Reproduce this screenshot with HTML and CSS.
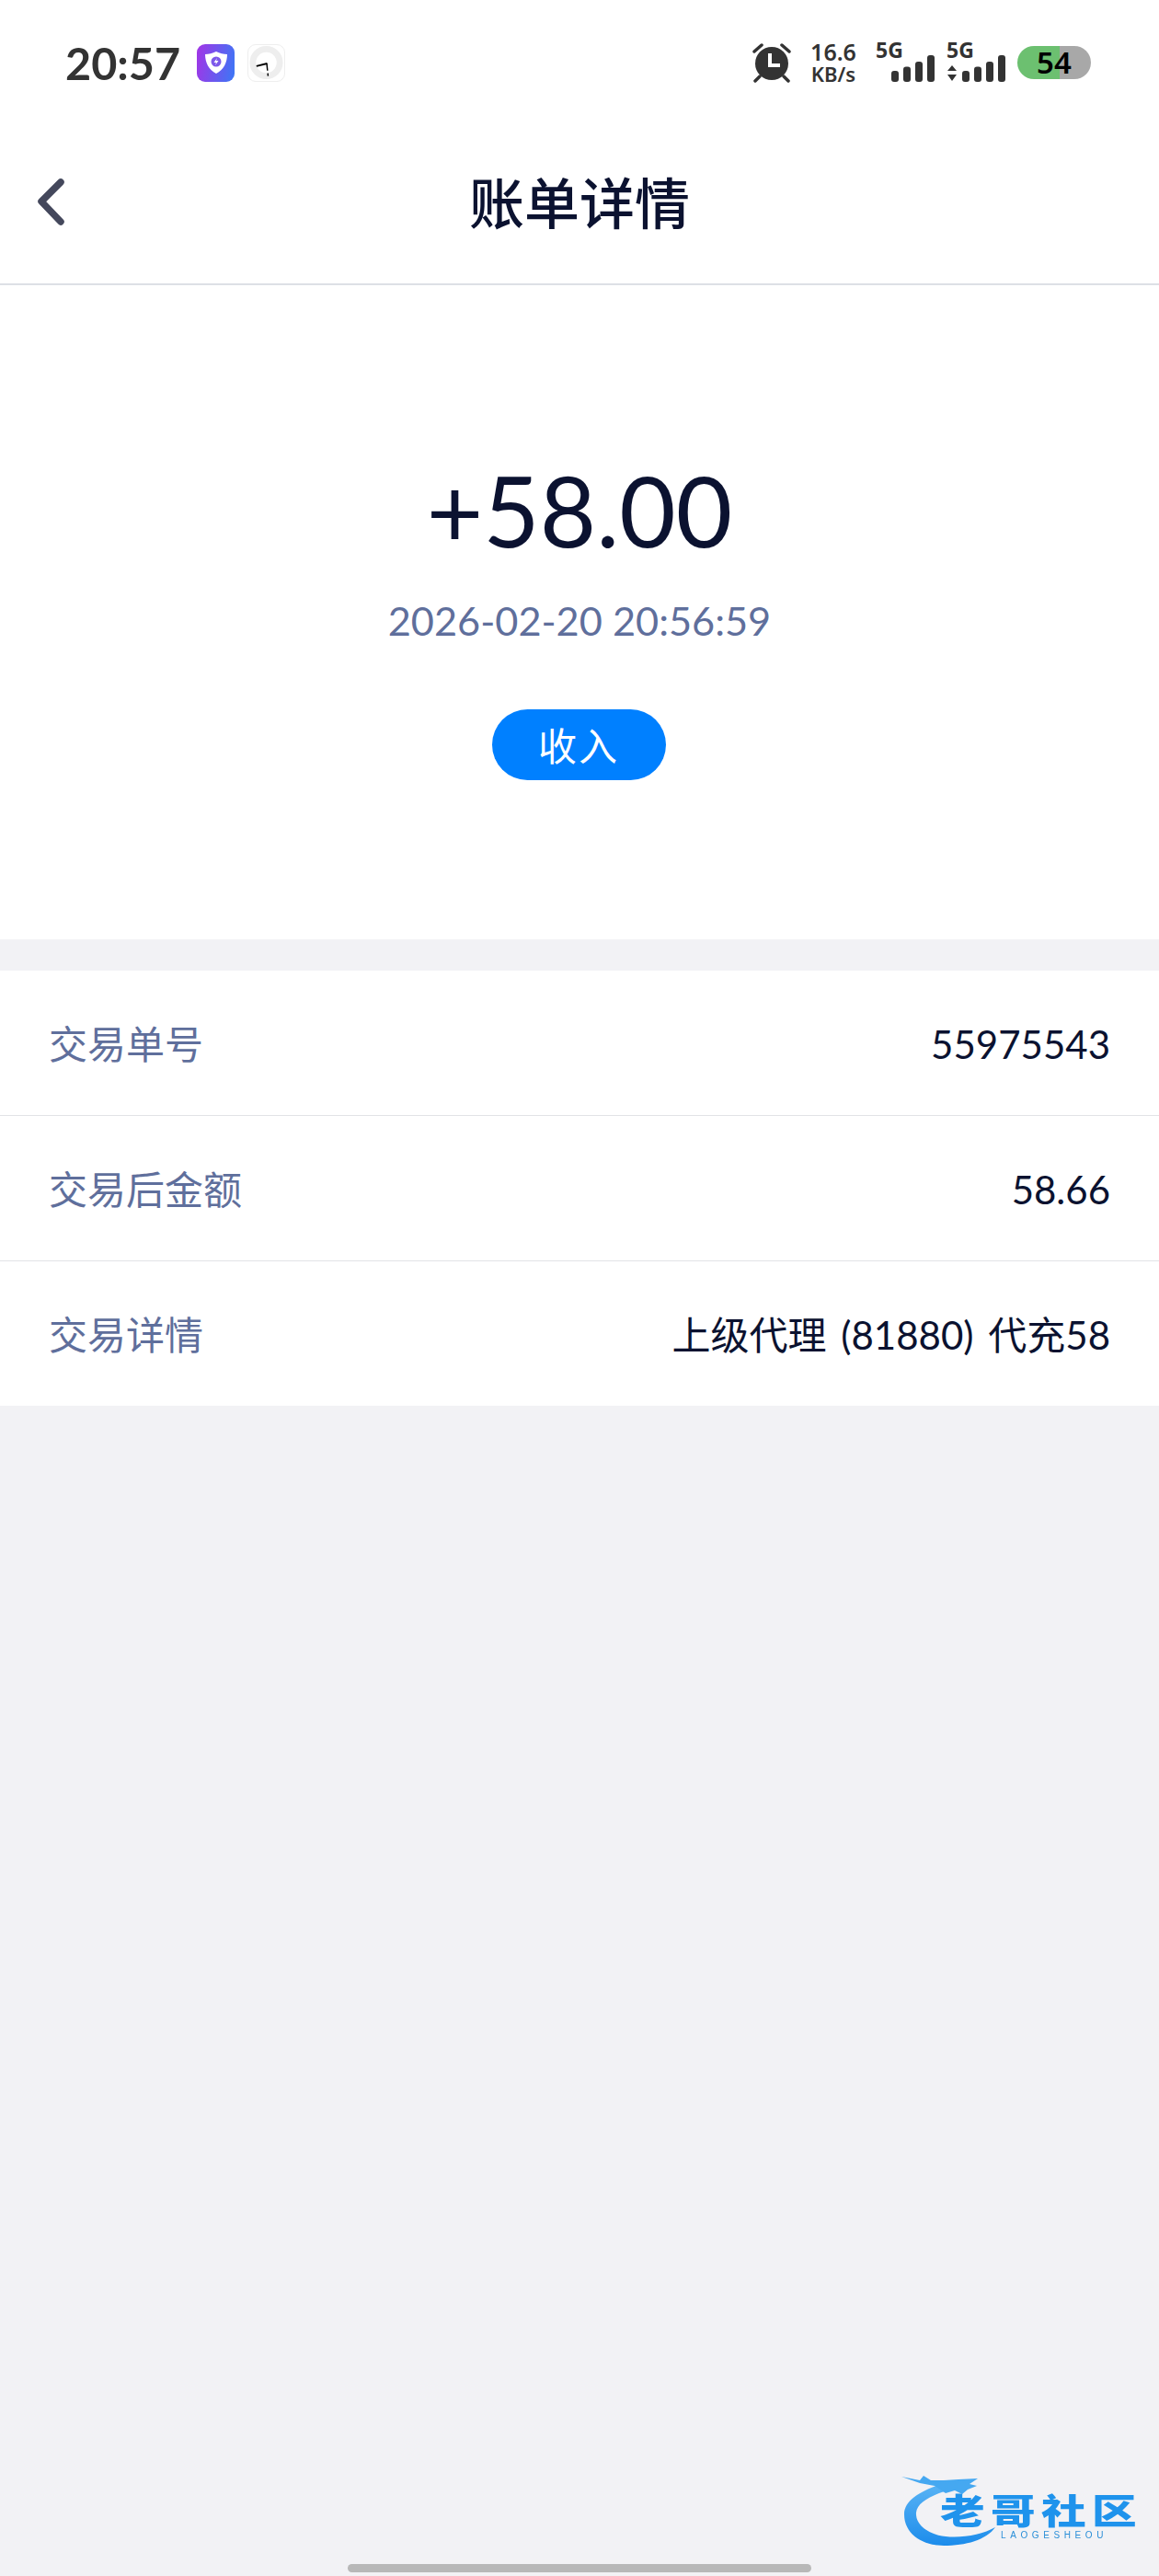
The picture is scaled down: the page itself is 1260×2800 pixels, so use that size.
FILE: index.html
```html
<!DOCTYPE html>
<html lang="zh-CN">
<head>
    <meta charset="UTF-8">
    <meta name="viewport" content="width=device-width, initial-scale=1.0">
    <title>账单详情</title>
    <link rel="stylesheet" href="styles.css">
</head>
<body>
    <div class="page">
        <div class="top">
            <div class="status-bar">
                <div class="status-left">
                    <span class="time">20:57</span>
                    <span class="app-icon app-shield">
                        <svg width="26" height="26" viewBox="0 0 26 26">
                            <path d="M13 1 C17 3 21 4 25 4 C25 13 21 21 13 25 C5 21 1 13 1 4 C5 4 9 3 13 1 Z" fill="#fff"/>
                            <circle cx="13" cy="12" r="5.5" fill="#7d58ea"/>
                            <path d="M14 8 L10.500 13 H13 L12 16 L15.500 11 H13 Z" fill="#fff"/>
                        </svg>
                    </span>
                    <span class="app-icon app-clock">
                        <svg width="40" height="40" viewBox="0 0 40 40">
                            <circle cx="20" cy="20" r="15" fill="none" stroke="#eeeeee" stroke-width="7"/>
                            <path d="M9 24 L21 21" stroke="#000" stroke-width="2" fill="none"/>
                            <path d="M20.500 21 L22 35" stroke="#000" stroke-width="1.500" stroke-dasharray="8 3 5" fill="none"/>
                        </svg>
                    </span>
                </div>
                <div class="status-right">
                    <svg class="alarm" width="44" height="44" viewBox="0 0 44 44">
                        <circle cx="22" cy="23" r="18" fill="#333"/>
                        <path d="M3 10 L11 3 M41 10 L33 3 M9 37 L4 42 M35 37 L40 42" stroke="#333" stroke-width="3.500" stroke-linecap="round"/>
                        <path d="M20 12 V25 H31" stroke="#fff" stroke-width="4" fill="none"/>
                    </svg>
                    <div class="speed">
                        <span class="speed-num">16.6</span>
                        <span class="speed-unit">KB/s</span>
                    </div>
                    <div class="signal">
                        <span class="signal-text">5G</span>
                        <svg class="bars" width="68" height="30" viewBox="0 0 68 30">
                            <rect x="17" y="17" width="8" height="12" rx="3" fill="#333"/>
                            <rect x="30" y="12.500" width="8" height="16.500" rx="3" fill="#333"/>
                            <rect x="43" y="7" width="8" height="22" rx="3" fill="#333"/>
                            <rect x="56" y="0" width="8" height="29" rx="3" fill="#333"/>
                        </svg>
                    </div>
                    <div class="signal">
                        <span class="signal-text">5G</span>
                        <svg class="bars" width="68" height="30" viewBox="0 0 68 30">
                            <path d="M1 17 L6 11 L11 17 Z M1 21 H11 L6 28 Z" fill="#333"/>
                            <rect x="17" y="17" width="8" height="12" rx="3" fill="#333"/>
                            <rect x="30" y="12.500" width="8" height="16.500" rx="3" fill="#333"/>
                            <rect x="43" y="7" width="8" height="22" rx="3" fill="#333"/>
                            <rect x="56" y="0" width="8" height="29" rx="3" fill="#333"/>
                        </svg>
                    </div>
                    <div class="battery">54</div>
                </div>
            </div>
            <div class="nav">
                <svg class="back" width="32" height="52" viewBox="0 0 32 52">
                    <path d="M26 4 L5 25 L26 47" fill="none" stroke="#44485c" stroke-width="7.500" stroke-linecap="round" stroke-linejoin="round"/>
                </svg>
                <h1 class="title">账单详情</h1>
            </div>
        </div>

        <div class="hero">
            <div class="amount">+58.00</div>
            <div class="date">2026-02-20 20:56:59</div>
            <div class="tag">收入</div>
        </div>

        <div class="list">
            <div class="row">
                <span class="label">交易单号</span>
                <span class="value">55975543</span>
            </div>
            <div class="row">
                <span class="label">交易后金额</span>
                <span class="value">58.66</span>
            </div>
            <div class="row">
                <span class="label">交易详情</span>
                <span class="value">上级代理 (81880) 代充58</span>
            </div>
        </div>

        <div class="home-bar"></div>

        <div class="watermark">
            <svg width="110" height="80" viewBox="0 0 110 80">
                <defs>
                    <linearGradient id="dragonBlue" x1="0" y1="0" x2="0" y2="1">
                        <stop offset="0" stop-color="#5ab4f5"/>
                        <stop offset="1" stop-color="#1c8ceb"/>
                    </linearGradient>
                </defs>
                <path d="M46 12 C22 20 3 30 3 46 C3 68 24 80 46 80 C70 80 92 74 102 60 C88 68 66 72 48 70 C30 68 15 58 16 44 C17 34 30 26 50 20 Z" fill="url(#dragonBlue)"/>
                <path d="M0 5 L20 9 L24 4 L32 9 L46 9 L62 8 L83 7 L74 13 L82 15 L72 19 L66 24 L58 20 L48 23 L36 15 L20 12 Z" fill="#45a8f1"/>
            </svg>
            <span class="wm-name">老哥社区</span>
            <span class="wm-sub">LAOGESHEOU</span>
        </div>
    </div>
</body>
</html>
```

FILE: styles.css
```css
body {
    margin: 0;
    background-color: #f2f2f5;
    font-family: "Lato", "Noto Sans CJK SC", sans-serif;
    color: #0b1230;
}
.page {
    position: relative;
    display: flex;
    flex-direction: column;
    height: 2800px;
    overflow: hidden;
}
.top {
    background-color: white;
    border-bottom: 2px solid #dde0e5;
    height: 308px;
}
.status-bar {
    display: flex;
    justify-content: space-between;
    align-items: center;
    height: 136px;
    padding: 0 74px 0 71px;
}
.status-left {
    display: flex;
    align-items: center;
}
.time {
    font-family: "Lato", sans-serif;
    font-size: 48.500px;
    font-weight: 700;
    color: #333;
    width: 143px;
}
.app-icon {
    display: flex;
    justify-content: center;
    align-items: center;
    width: 41px;
    height: 41px;
    border-radius: 9px;
    box-sizing: border-box;
}
.app-shield {
    background: linear-gradient(100deg, #a334e6, #3a78f6);
}
.app-clock {
    margin-left: 14px;
    border: 1px solid #eeeeee;
}
.status-right {
    display: flex;
    align-items: center;
}
.speed {
    display: flex;
    flex-direction: column;
    align-items: center;
    margin-left: 19px;
    width: 52px;
    color: #333;
    font-family: "Noto Sans", sans-serif;
    font-weight: 600;
}
.speed-num {
    font-size: 25px;
    line-height: 25px;
}
.speed-unit {
    font-size: 22px;
    line-height: 23px;
}
.signal {
    display: flex;
    flex-direction: column;
    margin-left: 20px;
    height: 44px;
}
.signal + .signal {
    margin-left: 9px;
}
.signal-text {
    font-family: "Noto Sans", sans-serif;
    font-size: 23px;
    line-height: 17px;
    font-weight: 700;
    color: #333;
}
.bars {
    margin-top: -3px;
}
.battery {
    margin-left: 9px;
    width: 80px;
    height: 36px;
    line-height: 36px;
    border-radius: 18px;
    text-align: center;
    font-family: "Noto Sans", sans-serif;
    font-size: 33px;
    font-weight: 600;
    color: black;
    background: linear-gradient(90deg, #6cc070 58%, #a8a8a8 58%);
}
.nav {
    display: grid;
    grid-template-columns: 1fr auto 1fr;
    align-items: center;
    height: 168px;
}
.back {
    margin-left: 40px;
}
.title {
    margin: -5px 0 0;
    font-family: "Noto Sans CJK SC", sans-serif;
    font-size: 60px;
    line-height: 80px;
    font-weight: 500;
    color: #0b1230;
}
.hero {
    display: flex;
    flex-direction: column;
    align-items: center;
    height: 711px;
    box-sizing: border-box;
    padding-top: 170px;
    background-color: white;
}
.amount {
    font-size: 106px;
    line-height: 148px;
    color: #0b1230;
}
.date {
    margin-top: 20px;
    font-size: 43.300px;
    line-height: 52px;
    color: #5f6f9c;
}
.tag {
    margin-top: 71px;
    margin-right: 2px;
    width: 189px;
    height: 77px;
    line-height: 75px;
    border-radius: 39px;
    text-align: center;
    font-family: "Noto Sans CJK SC", sans-serif;
    font-size: 42px;
    letter-spacing: 2px;
    color: white;
    background-color: #0080ff;
}
.list {
    margin-top: 34px;
    background-color: white;
}
.row {
    display: flex;
    justify-content: space-between;
    align-items: center;
    height: 157px;
    padding: 0 53px;
    border-bottom: 1px solid #e2e3e6;
}
.row:last-child {
    border-bottom: none;
}
.label {
    font-family: "Noto Sans CJK SC", sans-serif;
    font-size: 42px;
    line-height: 56px;
    margin-top: -2px;
    color: #5f6f9c;
}
.value {
    font-size: 42px;
    line-height: 56px;
    margin-top: 3px;
    word-spacing: 5px;
    color: #0b1230;
}
.home-bar {
    align-self: center;
    width: 504px;
    height: 9px;
    margin-top: auto;
    margin-bottom: 4px;
    border-radius: 5px;
    background-color: #b8b8b8;
}
.watermark {
    position: absolute;
    left: 980px;
    top: 2687px;
    width: 260px;
    height: 80px;
    filter: blur(0.7px);
}
.wm-name {
    position: absolute;
    left: 42px;
    top: 20px;
    width: 168px;
    font-family: "Noto Sans CJK SC", sans-serif;
    font-size: 38px;
    line-height: 40px;
    font-weight: 900;
    letter-spacing: 5px;
    white-space: nowrap;
    color: #1f93ec;
    transform: scaleX(1.28);
    transform-origin: left center;
}
.wm-sub {
    position: absolute;
    left: 108px;
    top: 63px;
    font-family: "Liberation Sans", sans-serif;
    font-size: 10px;
    line-height: 12px;
    letter-spacing: 4.600px;
    color: #2b8fd8;
}
```
